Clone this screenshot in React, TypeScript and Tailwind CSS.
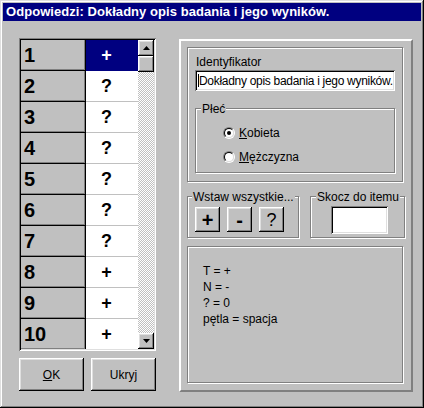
import React from 'react';

const raised =
  'bg-[#c0c0c0] shadow-[inset_-1px_-1px_0_#000000,inset_1px_1px_0_#ffffff,inset_-2px_-2px_0_#808080,inset_2px_2px_0_#dfdfdf]';
const sunken =
  'shadow-[inset_1px_1px_0_#808080,inset_-1px_-1px_0_#ffffff,inset_2px_2px_0_#000000,inset_-2px_-2px_0_#dfdfdf]';
const etched = 'border border-[#808080] shadow-[1px_1px_0_#ffffff,inset_1px_1px_0_#ffffff]';

const answers = ['+', '?', '?', '?', '?', '?', '?', '+', '+', '+'];

const Arrow = ({ down }: { down?: boolean }) => (
  <svg width="7" height="4" viewBox="0 0 7 4">
    <polygon points={down ? '0,0 7,0 3.5,4' : '3.5,0 7,4 0,4'} fill="#000" />
  </svg>
);

const Scrollbar = () => (
  <div className="w-[16px] flex flex-col">
    <div className={`h-[16px] shrink-0 flex items-center justify-center ${raised}`}>
      <Arrow />
    </div>
    <div className={`h-[16px] shrink-0 ${raised}`} />
    <div className="flex-1 bg-[repeating-conic-gradient(#c0c0c0_0_25%,#ffffff_0_50%)] bg-[length:2px_2px]" />
    <div className={`h-[16px] shrink-0 flex items-center justify-center ${raised}`}>
      <Arrow down />
    </div>
  </div>
);

const Radio = ({ checked, label, hot }: { checked?: boolean; label: string; hot: string }) => (
  <div className="flex items-center h-[16px]">
    <div className="w-[12px] h-[12px] rounded-full border border-t-[#808080] border-l-[#808080] border-r-white border-b-white">
      <div className="w-full h-full rounded-full border border-t-black border-l-black border-r-[#dfdfdf] border-b-[#dfdfdf] bg-white flex items-center justify-center">
        {checked && <div className="w-[4px] h-[4px] rounded-full bg-black" />}
      </div>
    </div>
    <span className="ml-[4px]">
      <span className="underline">{hot}</span>
      {label}
    </span>
  </div>
);

export default function App() {
  return (
    <div className="w-[424px] h-[408px] bg-[#c0c0c0] p-[3px] flex flex-col text-[12px] text-black font-['Liberation_Sans',Arial,sans-serif] shadow-[inset_-1px_-1px_0_#000000,inset_1px_1px_0_#dfdfdf,inset_-2px_-2px_0_#808080,inset_2px_2px_0_#ffffff]">
      {/* title bar */}
      <div className="h-[18px] bg-[#000080] text-white font-bold text-[13px] tracking-[0.05px] flex items-center pl-[3px] whitespace-nowrap">
        Odpowiedzi: Dokładny opis badania i jego wyników.
      </div>

      <div className="flex pl-[16px] pt-[17px]">
        {/* left: answer grid */}
        <div className="flex flex-col w-[137px]">
          <div className={`h-[313px] p-[2px] bg-white flex ${sunken}`}>
            <div className="flex flex-col w-[117px] overflow-hidden">
              {answers.map((v, i) => (
                <div key={i} className="flex h-[31px] shrink-0">
                  <div className="w-[65px] bg-[#c0c0c0] border-r border-b border-black shadow-[inset_-1px_-1px_0_#808080] pl-[3px] flex items-center text-[20px] font-bold">
                    {i + 1}
                  </div>
                  <div
                    className={`flex-1 border-b flex items-center justify-center pr-[11px] text-[18px] font-bold ${
                      i === 0 ? 'bg-[#000080] border-[#000080] text-white' : 'bg-white border-[#c0c0c0]'
                    }`}
                  >
                    {v}
                  </div>
                </div>
              ))}
            </div>
            <Scrollbar />
          </div>

          <div className="flex justify-between mt-[7px]">
            <button className={`w-[65px] h-[33px] ${raised}`}>
              <span className="underline">O</span>K
            </button>
            <button className={`w-[65px] h-[33px] ${raised}`}>Ukryj</button>
          </div>
        </div>

        {/* right panel */}
        <div className="ml-[23px] mt-[1px] w-[234px] h-[353px] border-2 border-t-white border-l-white border-r-[#808080] border-b-[#808080] p-[6px] flex flex-col">
          <div className={`w-[216px] h-[135px] pt-[7px] pl-[7px] ${etched}`}>
            <div className="pl-[1px] leading-[15px]">Identyfikator</div>
            <div className={`w-[200px] h-[21px] bg-white flex items-center pl-[3px] whitespace-nowrap tracking-[-0.3px] ${sunken}`}>
              <span className="w-px h-[13px] bg-black" />
              Dokładny opis badania i jego wyników.
            </div>
            <div className={`relative mt-[17px] w-[200px] h-[65px] pt-[16px] pl-[27px] ${etched}`}>
              <span className="absolute left-[5px] top-[-7px] px-[1px] leading-[14px] bg-[#c0c0c0]">Płeć</span>
              <div className="flex flex-col gap-[8px]">
                <Radio checked hot="K" label="obieta" />
                <Radio hot="M" label="ężczyzna" />
              </div>
            </div>
          </div>

          <div className="flex justify-between mt-[14px]">
            <div className={`relative w-[112px] h-[42px] pt-[10px] pl-[7px] flex gap-[7px] ${etched}`}>
              <span className="absolute left-[4px] top-[-7px] px-[1px] leading-[14px] bg-[#c0c0c0] whitespace-nowrap">
                Wstaw wszystkie...
              </span>
              <button className={`w-[25px] h-[25px] text-[20px] font-bold leading-none flex items-center justify-center ${raised}`}>+</button>
              <button className={`w-[25px] h-[25px] text-[20px] font-bold leading-none flex items-center justify-center ${raised}`}>-</button>
              <button className={`w-[25px] h-[25px] text-[18px] leading-none flex items-center justify-center ${raised}`}>?</button>
            </div>
            <div className={`relative w-[95px] h-[42px] pt-[9px] pl-[20px] ${etched}`}>
              <span className="absolute left-[5px] top-[-7px] px-[1px] leading-[14px] bg-[#c0c0c0] whitespace-nowrap">
                Skocz do itemu
              </span>
              <div className={`w-[57px] h-[28px] bg-white ${sunken}`} />
            </div>
          </div>

          <div className={`mt-[8px] w-[216px] h-[137px] pt-[16px] pl-[15px] leading-[16px] ${etched}`}>
            <div>T = +</div>
            <div>N = -</div>
            <div>? = 0</div>
            <div>pętla = spacja</div>
          </div>
        </div>
      </div>
    </div>
  );
}
